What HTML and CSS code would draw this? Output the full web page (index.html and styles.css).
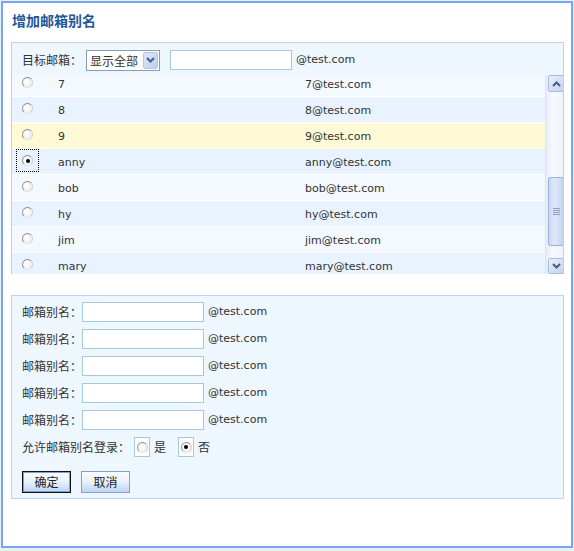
FILE: index.html
```html
<!DOCTYPE html>
<html lang="zh-CN">
<head>
<meta charset="utf-8">
<title>增加邮箱别名</title>
<link rel="stylesheet" href="styles.css">
</head>
<body>
<div class="frame">
  <h1 class="title">增加邮箱别名</h1>

  <div class="panel panel-top">
    <div class="head">
      <span class="label">目标邮箱：</span>
      <div class="select">
        <span class="select-text">显示全部</span>
        <span class="select-btn"><svg width="9" height="6" viewBox="0 0 9 6"><polyline points="1,1 4.5,4.5 8,1" fill="none" stroke="#4b5d80" stroke-width="2"/></svg></span>
      </div>
      <span class="input head-input"></span>
      <span class="domain">@test.com</span>
    </div>

    <div class="list">
      <div class="rows">
        <div class="rows-inner">
          <div class="row light"><span class="rwrap"><span class="radio"></span></span><span class="name">7</span><span class="mail">7@test.com</span></div>
          <div class="row dark"><span class="rwrap"><span class="radio"></span></span><span class="name">8</span><span class="mail">8@test.com</span></div>
          <div class="row hl"><span class="rwrap"><span class="radio"></span></span><span class="name">9</span><span class="mail">9@test.com</span></div>
          <div class="row dark"><span class="rwrap focus"><span class="radio on"></span></span><span class="name">anny</span><span class="mail">anny@test.com</span></div>
          <div class="row light"><span class="rwrap"><span class="radio"></span></span><span class="name">bob</span><span class="mail">bob@test.com</span></div>
          <div class="row dark"><span class="rwrap"><span class="radio"></span></span><span class="name">hy</span><span class="mail">hy@test.com</span></div>
          <div class="row light"><span class="rwrap"><span class="radio"></span></span><span class="name">jim</span><span class="mail">jim@test.com</span></div>
          <div class="row dark"><span class="rwrap"><span class="radio"></span></span><span class="name">mary</span><span class="mail">mary@test.com</span></div>
        </div>
      </div>
      <div class="scrollbar">
        <span class="sb-btn"><svg width="9" height="6" viewBox="0 0 9 6"><polyline points="1,5 4.5,1.5 8,5" fill="none" stroke="#4b5d80" stroke-width="2"/></svg></span>
        <span class="sb-thumb"><span class="grip"></span></span>
        <span class="sb-btn sb-down"><svg width="9" height="6" viewBox="0 0 9 6"><polyline points="1,1 4.5,4.5 8,1" fill="none" stroke="#4b5d80" stroke-width="2"/></svg></span>
      </div>
    </div>
  </div>

  <div class="panel panel-form">
    <div class="frow"><span class="label">邮箱别名：</span><span class="input"></span><span class="domain">@test.com</span></div>
    <div class="frow"><span class="label">邮箱别名：</span><span class="input"></span><span class="domain">@test.com</span></div>
    <div class="frow"><span class="label">邮箱别名：</span><span class="input"></span><span class="domain">@test.com</span></div>
    <div class="frow"><span class="label">邮箱别名：</span><span class="input"></span><span class="domain">@test.com</span></div>
    <div class="frow"><span class="label">邮箱别名：</span><span class="input"></span><span class="domain">@test.com</span></div>
    <div class="frow radios">
      <span class="label">允许邮箱别名登录：</span>
      <span class="rbox"><span class="radio"></span></span><span class="opt">是</span>
      <span class="rbox second"><span class="radio on"></span></span><span class="opt">否</span>
    </div>
    <div class="buttons">
      <span class="btn primary">确定</span>
      <span class="btn">取消</span>
    </div>
  </div>
</div>
</body>
</html>
```
FILE: styles.css
```css
html, body {
  margin: 0;
  padding: 0;
}
body {
  background: #e8f0fb;
  font-family: "DejaVu Sans", "Noto Sans CJK SC", sans-serif;
  font-size: 12px;
  color: #333;
  width: 574px;
  height: 551px;
  overflow: hidden;
}
.frame {
  box-sizing: border-box;
  margin: 1px;
  width: 572px;
  height: 547px;
  border: 2px solid #78a6f0;
  background: #fff;
}
.title {
  margin: 0;
  padding: 7px 0 0 9px;
  font-family: "Noto Sans CJK SC", sans-serif;
  font-size: 14px;
  font-weight: bold;
  line-height: 20px;
  color: #24579a;
}
.panel {
  border: 1px solid #b9d3f0;
  background: #eef6fe;
  margin: 0 7px 0 8px;
}
.panel-top {
  margin-top: 12px;
  border-bottom: none;
}
.head {
  display: flex;
  align-items: center;
  padding: 7px 0 5px 10px;
  height: 20px;
}
.label {
  font-family: "Noto Sans CJK SC", sans-serif;
  line-height: 20px;
  white-space: nowrap;
}
.head .label { width: 60px; }
.select {
  box-sizing: border-box;
  margin-left: 4px;
  width: 74px;
  height: 21px;
  border: 1px solid #8a9bb5;
  background: #fff;
  display: flex;
  align-items: center;
  justify-content: space-between;
  padding: 1px 1px 1px 3px;
}
.select-text {
  font-family: "Noto Sans CJK SC", sans-serif;
  line-height: 17px;
}
.select-btn {
  box-sizing: border-box;
  width: 15px;
  height: 17px;
  border: 1px solid #b4c6e6;
  border-radius: 2px;
  background: linear-gradient(135deg, #dde7f9, #bccff0);
  display: flex;
  align-items: center;
  justify-content: center;
}
.input {
  box-sizing: border-box;
  display: block;
  width: 122px;
  height: 20px;
  border: 1px solid #a8c8de;
  background: #fff;
}
.head-input { margin-left: 10px; }
.domain {
  margin-left: 4px;
  font-size: 11px;
  line-height: 20px;
  white-space: nowrap;
}
.list {
  display: flex;
  height: 199px;
  overflow: hidden;
}
.rows {
  flex: 1;
  overflow: hidden;
}
.rows-inner { margin-top: -4px; }
.row {
  display: flex;
  align-items: center;
  height: 25px;
  border-bottom: 1px solid #fff;
  padding-left: 4px;
  font-size: 11px;
}
.row.light { background: #f4f8ff; }
.row.dark { background: #e8f3ff; }
.row.hl { background: #fffad6; }
.rwrap {
  display: flex;
  padding: 5px;
  border: 1px dotted transparent;
  margin-top: -2px;
}
.rwrap.focus { border-color: #000; }
.radio {
  box-sizing: border-box;
  display: block;
  width: 11px;
  height: 11px;
  border-radius: 50%;
  border: 1px solid;
  border-color: #8a8a8a #cfcfcf #e4e4e4 #999;
  background: radial-gradient(circle at 40% 40%, #fff, #eaeaea);
  position: relative;
}
.radio.on::after {
  content: "";
  position: absolute;
  left: 2.5px;
  top: 2.5px;
  width: 4px;
  height: 4px;
  border-radius: 50%;
  background: #000;
}
.name {
  margin-left: 19px;
  width: 247px;
  padding-top: 2px;
}
.mail {
  white-space: nowrap;
  padding-top: 2px;
}
.scrollbar {
  box-sizing: border-box;
  width: 18px;
  padding-left: 2px;
  background: linear-gradient(to right, #e6edf9, #f7faff 40%, #eef3fc);
  border-left: 1px solid #dbe5f4;
  display: flex;
  flex-direction: column;
}
.sb-btn {
  box-sizing: border-box;
  width: 16px;
  height: 17px;
  border: 1px solid #a9bbdc;
  border-radius: 2px;
  background: linear-gradient(135deg, #e9f0fd, #c2d3f2);
  display: flex;
  align-items: center;
  justify-content: center;
}
.sb-down {
  margin-top: 12px;
  height: 16px;
}
.sb-thumb {
  box-sizing: border-box;
  margin-top: 85px;
  width: 16px;
  height: 69px;
  border: 1px solid #9cb2d8;
  border-radius: 2px;
  background: linear-gradient(to right, #c9d8f3, #dfe8fa 40%, #c3d4f1);
  display: flex;
  align-items: center;
  justify-content: center;
}
.grip {
  width: 7px;
  height: 7px;
  background: repeating-linear-gradient(to bottom, #8b9ec4 0 1px, transparent 1px 2px);
}
.panel-form {
  margin-top: 21px;
  padding: 6px 0 5px 10px;
}
.frow {
  display: flex;
  align-items: center;
  height: 20px;
  margin-bottom: 7px;
}
.frow .label { width: 60px; }
.frow.radios .label { width: 112px; }
.rbox {
  box-sizing: border-box;
  width: 16px;
  height: 20px;
  border: 1px solid #a8c8de;
  background: #fff;
  display: flex;
  align-items: center;
  justify-content: center;
}
.rbox.second { margin-left: 12px; }
.opt {
  margin-left: 4px;
  font-family: "Noto Sans CJK SC", sans-serif;
  line-height: 20px;
}
.buttons {
  display: flex;
  gap: 10px;
  margin-top: 14px;
}
.btn {
  box-sizing: border-box;
  width: 49px;
  height: 22px;
  border: 1px solid #7ea3d2;
  background: linear-gradient(#fbfdff, #eaf2fd 45%, #bed5f4);
  font-family: "Noto Sans CJK SC", sans-serif;
  line-height: 20px;
  text-align: center;
  color: #222;
}
.btn.primary {
  border-color: #111;
  box-shadow: inset 0 0 0 1px #7ea3d2;
}
```
